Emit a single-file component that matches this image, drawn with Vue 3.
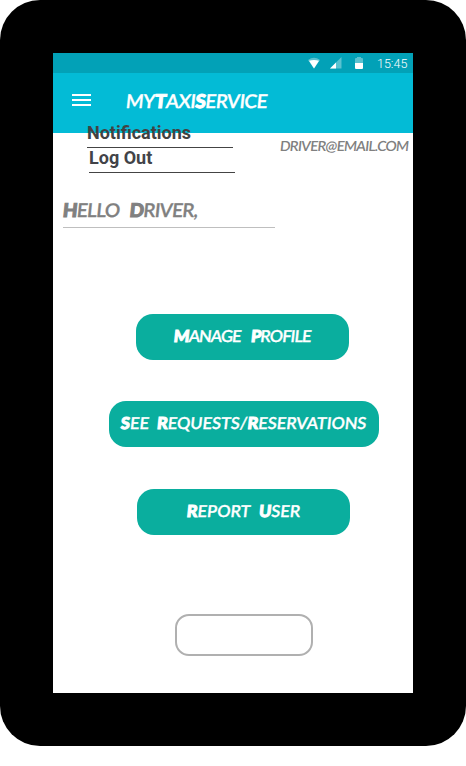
<script setup>
import { h } from 'vue'

// Hand-lettered text: every letter is drawn as a capital, true capitals are heavier.
const Lettering = (props) =>
  h(
    'span',
    { class: 'lettering' },
    props.text
      .split(/([A-Z])/)
      .filter(Boolean)
      .map((part) => (/^[A-Z]$/.test(part) ? h('b', part) : part))
  )
Lettering.props = ['text']

const menuItems = ['Notifications', 'Log Out']
const actions = [
  { label: 'Manage Profile', kind: 'profile' },
  { label: 'See Requests/Reservations', kind: 'requests' },
  { label: 'Report User', kind: 'report' },
]
</script>

<template>
  <div class="device">
    <div class="screen">
      <div class="status">
        <svg class="wifi" width="14" height="12" viewBox="0 0 14 12">
          <path d="M1 3Q7-1.4 13 3L7 11.5Z" fill="#fff" fill-opacity=".35" />
          <path d="M2 3.8Q7 2 12 3.8L7 11.5Z" fill="#fff" />
        </svg>
        <svg class="signal" width="12" height="12" viewBox="0 0 12 12">
          <path d="M0 11.5L11.5 0V11.5Z" fill="#fff" fill-opacity=".35" />
          <path d="M0 11.5L6 5.5V11.5Z" fill="#fff" />
        </svg>
        <svg class="battery" width="8" height="12" viewBox="0 0 8 12">
          <path d="M0 2Q0 1 1 1H2V0H6V1H7Q8 1 8 2V6H0Z" fill="#fff" fill-opacity=".35" />
          <path d="M0 6H8V11Q8 12 7 12H1Q0 12 0 11Z" fill="#fff" />
        </svg>
        <span class="clock">15:45</span>
      </div>
      <header class="bar">
        <svg width="19" height="12" viewBox="0 0 19 12" fill="#fff">
          <path d="M0 0H19V2H0ZM0 5H19V7H0ZM0 10H19V12H0Z" />
        </svg>
        <h1><Lettering text="myTaxiService" /></h1>
        <nav class="menu">
          <a v-for="item in menuItems" :key="item">{{ item }}</a>
        </nav>
      </header>
      <div class="email"><Lettering text="driver@email.com" /></div>
      <div class="hello"><Lettering text="Hello Driver," /></div>
      <main class="actions">
        <button v-for="action in actions" :key="action.kind" :class="action.kind">
          <Lettering :text="action.label" />
        </button>
      </main>
      <div class="blank"></div>
    </div>
  </div>
</template>

<style>
body {
  background: #fff;
}
</style>

<style scoped>
.device {
  box-sizing: border-box;
  width: 466px;
  height: 746px;
  padding: 53px;
  border-radius: 40px;
  background: #000;
}
.screen {
  display: flex;
  flex-direction: column;
  width: 360px;
  height: 640px;
  background: #fff;
}
.status {
  display: flex;
  align-items: center;
  justify-content: flex-end;
  height: 20px;
  padding-right: 5px;
  background: #02a1b7;
}
.signal {
  margin-left: 9px;
}
.battery {
  margin: -1px 0 0 13px;
}
.clock {
  width: 31px;
  margin-left: 14px;
  font: 300 12.5px/21px Roboto, sans-serif;
  color: #fff;
  white-space: nowrap;
}
.bar {
  position: relative;
  display: flex;
  align-items: center;
  box-sizing: border-box;
  height: 60px;
  padding: 0 0 6px 19px;
  background: #03bbd6;
}
h1 {
  margin: 3px 0 0 35px;
  font-size: 19px;
  line-height: 24px;
  font-weight: 400;
  letter-spacing: -0.5px;
  color: #fff;
}
.lettering {
  display: inline-block;
  font-family: Lato, sans-serif;
  font-weight: 600;
  text-transform: uppercase;
  white-space: nowrap;
  transform: skewX(-6deg);
  -webkit-text-stroke: 0.3px currentColor;
}
.lettering :deep(b) {
  font-weight: 900;
  -webkit-text-stroke: 1px currentColor;
}
.menu {
  position: absolute;
  top: 48px;
  left: 34px;
}
.menu a {
  display: block;
  box-sizing: border-box;
  width: 146px;
  height: 27px;
  border-bottom: 1px solid #444;
  font: 700 18px/24px Roboto, sans-serif;
  color: #424242;
}
.menu a + a {
  height: 25px;
  margin-left: 2px;
  line-height: 20px;
  color: #424348;
}
.email {
  height: 26px;
  padding-right: 5px;
  font-size: 14px;
  line-height: 26px;
  letter-spacing: -0.75px;
  text-align: right;
  color: #808080;
}
.email .lettering {
  -webkit-text-stroke-width: 0;
}
.hello {
  box-sizing: border-box;
  width: 212px;
  height: 35px;
  margin: 34px 0 0 10px;
  border-bottom: 1px solid #bfbfbf;
  font-size: 19px;
  line-height: 33px;
  letter-spacing: -0.65px;
  word-spacing: 6px;
  color: #808080;
}
.actions {
  display: flex;
  flex-direction: column;
  margin-top: 86px;
}
button {
  width: 213px;
  height: 46px;
  margin: 0 0 41px 83px;
  padding: 0 0 2px;
  border: 0;
  border-radius: 17px;
  background: #0aae9e;
  font-size: 16.5px;
  letter-spacing: -0.9px;
  word-spacing: 7px;
  color: #fff;
}
.requests {
  width: 270px;
  margin: 0 0 42px 56px;
  letter-spacing: 0;
  word-spacing: 4px;
}
.report {
  margin: 0 0 0 84px;
  letter-spacing: 0;
  word-spacing: 5px;
}
.blank {
  box-sizing: border-box;
  width: 138px;
  height: 42px;
  margin: 79px 0 0 122px;
  border: 2px solid #b0b0b0;
  border-radius: 14px;
}
</style>
